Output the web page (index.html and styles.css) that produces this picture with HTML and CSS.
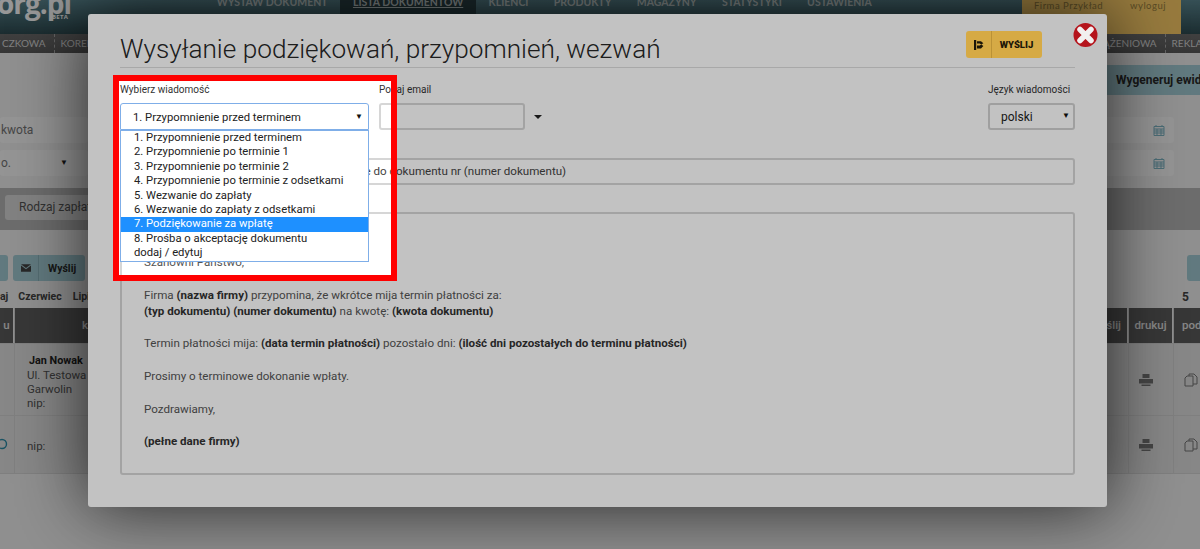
FILE: index.html
```html
<!DOCTYPE html>
<html lang="pl">
<head>
<meta charset="utf-8">
<title>Wysyłanie podziękowań</title>
<link rel="stylesheet" href="styles.css">
</head>
<body>
<div class="page">
  <header class="topbar">
    <div class="logo">org.pl<span class="beta">BETA</span></div>
    <nav class="mainnav">
      <a>WYSTAW DOKUMENT</a>
      <a class="active">LISTA DOKUMENTÓW</a>
      <a>KLIENCI</a>
      <a>PRODUKTY</a>
      <a>MAGAZYNY</a>
      <a>STATYSTYKI</a>
      <a>USTAWIENIA</a>
    </nav>
    <div class="account"><span>Firma Przykład</span><span>wyloguj</span></div>
  </header>
  <div class="subnav">
    <div class="subgroup"><span>CZKOWA</span><span class="sep">KOREKTA</span></div>
    <div class="subgroup"><span>ĄŻENIOWA</span><span class="sep">REKLAMA</span></div>
  </div>
  <div class="genrow"><button class="teal-btn gen">Wygeneruj ewidencję</button></div>
  <div class="filter-row first">
    <div class="field left">kwota</div>
    <div class="field right"><svg class="cal" viewBox="0 0 12 12"><path d="M1 2.500h10v9H1zM1 5h10M3 1v2M9 1v2M1 7h10M1 9h10M4 5v6M8 5v6"/></svg></div>
  </div>
  <div class="filter-row second">
    <div class="field left sel">o.<i>▼</i></div>
    <div class="field right"><svg class="cal" viewBox="0 0 12 12"><path d="M1 2.500h10v9H1zM1 5h10M3 1v2M9 1v2M1 7h10M1 9h10M4 5v6M8 5v6"/></svg></div>
  </div>
  <div class="band"><div class="field pay">Rodzaj zapłaty</div></div>
  <div class="actions">
    <div class="action-left">
      <span class="teal-btn stub"></span>
      <span class="teal-btn send"><span class="mail-cell"><svg class="mail" viewBox="0 0 12 9"><path d="M0 0h12L6 4.500zM0 1.500v7.500h12V1.500L6 6z"/></svg></span><b>Wyślij</b></span>
    </div>
    <span class="teal-btn stub-r"></span>
  </div>
  <div class="months">
    <div class="months-left"><span>aj</span><span>Czerwiec</span><span>Lipiec</span></div>
    <span class="pagenum">5</span>
  </div>
  <div class="doc-table">
    <div class="th">u</div><div class="th name">kontrahent</div><div class="th send-col">wyślij</div><div class="th">drukuj</div><div class="th pod">podgląd</div>
    <div class="td"></div>
    <div class="td client"><b>Jan Nowak</b><span>Ul. Testowa 12</span><span>Garwolin</span><span>nip:</span></div>
    <div class="td"></div>
    <div class="td ico print"><svg viewBox="0 0 14 12"><path class="fill" d="M3.500 0h7v4h-7zM0 5h14v4.500H0zM2.500 10.500h9V12h-9z"/></svg></div>
    <div class="td ico copy"><svg viewBox="0 0 14 14"><path d="M3 3h6v10H1V5zM5 3V1h5l3 3v7H9"/></svg></div>
    <div class="td eye"><svg viewBox="0 0 12 12"><circle cx="2" cy="6" r="4.500"/></svg></div>
    <div class="td client low"><span>nip:</span></div>
    <div class="td"></div>
    <div class="td ico print"><svg viewBox="0 0 14 12"><path class="fill" d="M3.500 0h7v4h-7zM0 5h14v4.500H0zM2.500 10.500h9V12h-9z"/></svg></div>
    <div class="td ico copy"><svg viewBox="0 0 14 14"><path d="M3 3h6v10H1V5zM5 3V1h5l3 3v7H9"/></svg></div>
  </div>
</div>

<div class="backdrop"></div>

<section class="modal">
  <div class="modal-head">
    <h1>Wysyłanie podziękowań, przypomnień, wezwań</h1>
    <button class="send-btn"><span class="send-ico"><svg viewBox="0 0 10 10"><path d="M0 0h2.200v10H0zM3 1.200l4 0 2.400 2-2.200 1.400-1.400-1.200H3zM3 5.600h2.800l1.400-1 2.200 1.400-2.400 2.400H3z"/></svg></span><span class="send-txt">WYŚLIJ</span></button>
  </div>
  <button class="close" aria-label="Zamknij"><svg viewBox="0 0 24 24"><circle cx="12" cy="12" r="12"/><path d="M6.500 6.500l11 11M17.500 6.500l-11 11"/></svg></button>

  <div class="form-row">
    <div class="col col-msg">
      <label>Wybierz wiadomość</label>
      <div class="select open">1. Przypomnienie przed terminem<i>▼</i>
        <ul class="options">
          <li>1. Przypomnienie przed terminem</li>
          <li>2. Przypomnienie po terminie 1</li>
          <li>3. Przypomnienie po terminie 2</li>
          <li>4. Przypomnienie po terminie z odsetkami</li>
          <li>5. Wezwanie do zapłaty</li>
          <li>6. Wezwanie do zapłaty z odsetkami</li>
          <li class="sel">7. Podziękowanie za wpłatę</li>
          <li>8. Prośba o akceptację dokumentu</li>
          <li>dodaj / edytuj</li>
        </ul>
      </div>
    </div>
    <div class="col col-mail">
      <label>Podaj email</label>
      <div class="mail-wrap"><div class="input"></div><span class="caret"></span></div>
    </div>
    <div class="col col-lang">
      <label>Język wiadomości</label>
      <div class="select lang">polski<i>▼</i></div>
    </div>
  </div>

  <div class="input subject">Przypomnienie o zbliżającym się terminie do dokumentu nr (numer dokumentu)</div>

  <div class="body-box">
    <p>Szanowni Państwo,</p>
    <p>Firma <b>(nazwa firmy)</b> przypomina, że wkrótce mija termin płatności za:<br>
    <b>(typ dokumentu) (numer dokumentu)</b> na kwotę: <b>(kwota dokumentu)</b></p>
    <p>Termin płatności mija: <b>(data termin płatności)</b> pozostało dni: <b>(ilość dni pozostałych do terminu płatności)</b></p>
    <p>Prosimy o terminowe dokonanie wpłaty.</p>
    <p>Pozdrawiamy,</p>
    <p><b>(pełne dane firmy)</b></p>
  </div>

  <div class="focus-frame"></div>
</section>
</body>
</html>
```

FILE: styles.css
```css
* { box-sizing: border-box; }
html, body { margin: 0; height: 549px; overflow: hidden; }
body {
  position: relative;
  font-family: "Roboto", "Liberation Sans", sans-serif;
  background: #f2f2f2;
  color: #333;
  font-size: 12px;
}

/* ---------- background page ---------- */
.page { width: 1200px; height: 549px; overflow: hidden; }
.topbar {
  display: flex;
  height: 34px;
  background: linear-gradient(#5b8791, #2f4c52);
}
.logo {
  width: 217px;
  flex: none;
  margin-top: -15px;
  margin-left: -3px;
  font: 700 28px/36px "Open Sans", sans-serif;
  letter-spacing: -1px;
  color: #fff;
  position: relative;
}
.beta { position: absolute; left: 55px; top: 28px; font-size: 6px; line-height: 8px; letter-spacing: .3px; }
.mainnav { display: flex; height: 14px; margin-left: -10px; }
.mainnav a {
  padding: 0 12.65px;
  font: 700 10.5px/5px "Lato", sans-serif;
  color: #c9d4d4;
}
.mainnav a.active { background: #2c444a; text-decoration: underline; }
.account {
  margin-left: auto;
  margin-right: 19px;
  width: 159px;
  background: #ffd069;
  display: flex;
  justify-content: space-between;
  padding: 0 15px 0 12px;
  font: 400 9.5px/11px "Lato", sans-serif;
  letter-spacing: .5px;
  color: #99803f;
}
.subnav {
  height: 19px;
  background: linear-gradient(#6c6c6c, #5c5c5c);
  display: flex;
  justify-content: space-between;
  overflow: hidden;
  font: 400 10px/19px "Lato", sans-serif;
  color: #d8d8d8;
}
.subgroup { display: flex; gap: 15px; width: 88px; padding-left: 2px; white-space: nowrap; }
.subgroup:last-child { width: 97px; padding-left: 0; }
.subgroup .sep { border-left: 1px dashed #aaa; padding-left: 6px; margin-left: -7px; }
.genrow { height: 12px; display: flex; justify-content: flex-end; position: relative; overflow: visible; }
.teal-btn { background: #a4cdd6; border-radius: 3px; border: 0; display: block; color: #2a2a2a; font: 700 12px "Roboto", sans-serif; }
.gen { height: 30px; margin-top: 12px; padding: 0 0 0 9px; width: 93px; white-space: nowrap; overflow: hidden; text-align: left; border-radius: 0; }
.filter-row { display: flex; justify-content: space-between; height: 26px; }
.filter-row.first { margin-top: 52px; }
.filter-row.second { margin-top: 7px; }
.field { background: #fafafa; border-radius: 3px; color: #777; line-height: 26px; font-size: 12px; }
.field.left { width: 88px; padding-left: 1px; position: relative; }
.field.right { width: 88px; margin-right: 26px; display: flex; justify-content: flex-end; align-items: center; padding-right: 9px; }
.field.left i { position: absolute; right: 20px; top: 0; font-style: normal; color: #222; font-size: 8px; }
.cal { width: 12px; height: 12px; fill: none; stroke: #7fb6c6; stroke-width: 1; }
.band { height: 42px; margin-top: 12px; background: #b8b8b8; padding: 7px 0 0 5px; }
.field.pay { width: 100px; height: 25px; line-height: 25px; padding-left: 14px; background: #dcdcdc; color: #555; }
.actions { display: flex; justify-content: space-between; margin-top: 25px; height: 26px; }
.action-left { display: flex; gap: 5px; }
.stub { width: 8px; height: 26px; border-radius: 0 3px 3px 0; }
.send { width: 72px; height: 26px; display: flex; align-items: center; gap: 9px; font-weight: 700; font-size: 10.5px; }
.mail-cell { width: 26px; height: 26px; display: flex; align-items: center; justify-content: center; border-right: 1px solid #8fb8c1; }
.mail { width: 10px; height: 8px; fill: #444; flex: none; }
.send b { font-weight: 700; }
.stub-r { width: 13px; height: 26px; border-radius: 3px 0 0 3px; }
.months { display: flex; justify-content: space-between; height: 27px; padding-right: 11px; font: 700 10.5px/32px "Roboto", sans-serif; color: #444; }
.months-left { display: flex; gap: 11px; }
.months-left span:first-child { margin-right: -1px; }
.pagenum { font-size: 12px; }
.doc-table {
  display: grid;
  grid-template-columns: 14px 1fr 81px 44px 66px;
  grid-template-rows: 35px 71px 57px;
  gap: 1px 1px;
  margin-right: -40px;
  background: #d8d8d8;
  padding-bottom: 1px;
}
.th { background: #5e5e5e; color: #e4e4e4; font: 500 11.5px/35px "Roboto", sans-serif; text-align: center; border-right: 1px solid #f2f2f2; overflow: hidden; }
.th.name { text-align: left; padding-left: 67px; }
.th.send-col { text-align: right; padding-right: 6px; }
.th.pod { text-align: left; padding-left: 8px; }
.td { background: #e4e4e4; }
.client { display: flex; flex-direction: column; padding: 10px 0 0 12px; font-size: 11.5px; line-height: 14px; color: #555; }
.client b { color: #222; margin-left: 2px; font-size: 10.8px; }
.client.low { padding-top: 23px; }
.ico { display: flex; align-items: center; justify-content: center; }
.ico.print { padding-right: 10px; }
.ico.copy { justify-content: flex-start; padding-left: 10px; }
.ico svg { width: 14px; height: 14px; fill: none; stroke: #777; stroke-width: 1; }
.ico svg .fill { fill: #777; stroke: none; }
.eye svg { display: block; width: 12px; height: 12px; margin-top: 22px; fill: none; stroke: #2b8ca8; stroke-width: 1.4; }

/* ---------- modal ---------- */
.backdrop { position: absolute; inset: 0; background: rgba(0,0,0,.22); }
.modal {
  position: absolute;
  left: 88px;
  top: 14px;
  width: 1019px;
  height: 493px;
  padding: 0 32px;
  background: #fff;
  border-radius: 3px;
  box-shadow: 0 0 70px rgba(0,0,0,.75);
  font-family: "Roboto", sans-serif;
}
.modal-head {
  display: flex;
  justify-content: space-between;
  align-items: flex-start;
  height: 54px;
  border-bottom: 1px solid #ddd;
}
h1 {
  margin: 19px 0 0;
  font: 300 26.2px/33px "Roboto", sans-serif;
  color: #272727;
  white-space: nowrap;
}
.send-btn {
  position: relative;
  z-index: 20;
  display: flex;
  height: 27px;
  width: 76px;
  margin: 17px 33px 0 0;
  padding: 0;
  border: 0;
  border-radius: 3px;
  background: #d6aa45;
  overflow: hidden;
}
.send-ico { width: 26px; height: 27px; display: flex; align-items: center; justify-content: center; border-right: 1px solid #bb9236; padding-left: 1px; }
.send-ico svg { width: 10px; height: 10px; fill: #1c1608; }
.send-txt { flex: 1; font: 900 9.5px/27px "Roboto", sans-serif; color: #1c1608; text-align: center; padding-right: 1px; }
.close {
  position: absolute;
  z-index: 20;
  right: 9px;
  top: 9px;
  width: 25px;
  height: 24px;
  padding: 0;
  border: 0;
  background: none;
}
.close svg { display: block; width: 25px; height: 24px; }
.close circle { fill: #b5141c; }
.close path { stroke: #f2f0f0; stroke-width: 5.5; fill: none; stroke-linecap: round; }

.form-row { display: flex; margin-top: 14px; height: 62px; }
.col label { display: block; font: 400 10px/16px "Roboto", sans-serif; color: #333; margin-bottom: 5px; }
.col-msg { width: 249px; }
.col-mail { width: 609px; margin-left: 10px; }
.col-lang { width: 87px; }
.select {
  position: relative;
  height: 27px;
  padding-left: 12px;
  font: 400 11.25px/27px "Roboto", sans-serif;
  color: #222;
  background: #fff;
  border: 1px solid #c8c8c8;
  border-radius: 3px;
}
.select i { position: absolute; right: 5px; top: -1px; font-style: normal; font-size: 8px; color: #111; }
.select.open { border-color: #7faee8; border-radius: 3px 3px 0 0; }
.select.lang { padding-left: 11px; border: 2px solid #d2d2d2; line-height: 25px; font-size: 12px; }
.select.lang i { right: 3px; top: -2px; }
.options {
  position: absolute;
  z-index: 5;
  left: -1px;
  top: 26px;
  width: 249px;
  margin: 0;
  padding: 0;
  list-style: none;
  background: #fff;
  border: 1px solid #7faee8;
}
.options li { height: 14.4px; padding-left: 13px; font-size: 11.25px; line-height: 14.4px; color: #222; }
.options li.sel { background: #1e90ff; color: #fff; }
.mail-wrap { display: flex; align-items: center; gap: 9px; }
.input { background: #fff; border: 2px solid #d6d6d6; border-radius: 3px; height: 27px; }
.mail-wrap .input { width: 146px; }
.caret { width: 0; height: 0; border: 4px solid transparent; border-top-color: #222; border-bottom: 0; }
.subject { margin-top: 14px; height: 27px; padding-left: 36px; font-size: 11.6px; line-height: 23px; color: #444; white-space: nowrap; }
.body-box {
  margin-top: 27px;
  height: 263px;
  padding: 40px 22px 0;
  border: 2px solid #d6d6d6;
  border-radius: 3px;
  font-size: 11.6px;
  line-height: 16.3px;
  color: #555;
}
.body-box p { margin: 0 0 16.3px; }
.body-box b { color: #333; }

/* highlight frame: a window of full colour in a dimmed picture */
.focus-frame {
  position: absolute;
  z-index: 10;
  left: 25px;
  top: 61px;
  width: 284px;
  height: 206px;
  border: 6px solid #f00;
  box-shadow: 0 0 0 1400px rgba(0,0,0,.24);
  pointer-events: none;
}
```
